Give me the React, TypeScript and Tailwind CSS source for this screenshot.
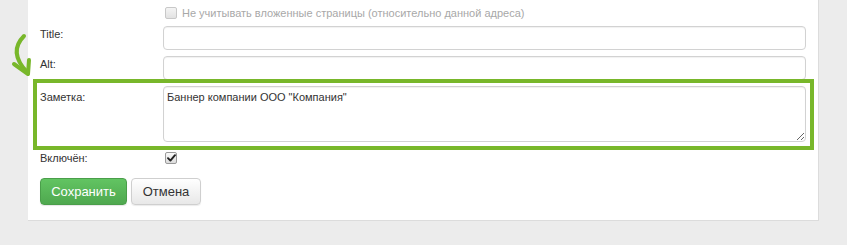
import React from "react";

function Check({ checked, disabled }: { checked?: boolean; disabled?: boolean }) {
  return (
    <span
      className={
        disabled
          ? "flex h-[12px] w-[12px] items-center justify-center rounded-[2px] border border-[#c8c8c8] bg-gradient-to-b from-[#f4f4f4] to-[#e2e2e2]"
          : "flex h-[12px] w-[12px] items-center justify-center rounded-[2px] border border-[#9a9a9a] bg-gradient-to-b from-[#fafafa] to-[#dcdcdc]"
      }
    >
      {checked && (
        <svg width="9" height="8" viewBox="0 0 9 8">
          <path d="M1 4.2 L3.4 6.6 L8 1.2" fill="none" stroke="#222" strokeWidth="1.9" strokeLinecap="round" strokeLinejoin="round" />
        </svg>
      )}
    </span>
  );
}

export default function App() {
  return (
    <div className="relative h-[245px] w-[847px] overflow-hidden bg-[#ececec] font-['Liberation_Sans',Arial,sans-serif] text-[11px] text-[#333]">
      <svg className="absolute left-0 top-0" width="40" height="85" viewBox="0 0 40 85">
        <path d="M24 36 Q8 52 27 72" fill="none" stroke="#78b72a" strokeWidth="4" strokeLinecap="round" />
        <path d="M14 64 L28 74 L29 60" fill="none" stroke="#78b72a" strokeWidth="4" strokeLinecap="round" strokeLinejoin="round" />
      </svg>
      <div className="ml-[28px] h-[221px] w-[791px] border-b border-r border-[#dcdcdc] bg-white px-[12px] pt-[7px]">
        <div className="flex h-[12px] items-center">
          <div className="w-[125px] shrink-0" />
          <Check disabled />
          <span className="ml-[5px] leading-[16px] text-[#a8a8a8]">
            Не учитывать вложенные страницы (относительно данной адреса)
          </span>
        </div>
        <div className="mt-[7px] flex">
          <div className="w-[123px] shrink-0 leading-[16px]">Title:</div>
          <input className="h-[24px] flex-1 rounded-[4px] border border-[#d2d2d2] bg-white shadow-[inset_0_1px_1px_rgba(0,0,0,0.06)] outline-none" />
        </div>
        <div className="mt-[6px] flex">
          <div className="w-[123px] shrink-0 leading-[16px]">Alt:</div>
          <input className="h-[24px] flex-1 rounded-[4px] border border-[#d2d2d2] bg-white shadow-[inset_0_1px_1px_rgba(0,0,0,0.06)] outline-none" />
        </div>
        <div className="relative -mt-[1px] ml-[-7px] mr-[-8px] flex border-[4px] border-[#78b72a] pb-[4px] pl-[3px] pr-[4px] pt-[3px]">
          <div className="w-[123px] shrink-0 pt-[3px] leading-[16px]">Заметка:</div>
          <textarea
            defaultValue={'Баннер компании ООО "Компания"'}
            className="h-[56px] flex-1 resize rounded-[4px] border border-[#d2d2d2] bg-white px-[3px] pt-[2px] font-['Liberation_Sans',Arial,sans-serif] text-[11px] leading-[16px] text-[#333] shadow-[inset_0_1px_1px_rgba(0,0,0,0.06)] outline-none"
          />
        </div>
        <div className="flex items-start">
          <div className="w-[125px] shrink-0 leading-[16px]">Включён:</div>
          <div className="mt-[2px]">
            <Check checked />
          </div>
        </div>
        <div className="mt-[12px] flex gap-[4px]">
          <button className="flex h-[27px] w-[87px] items-center justify-center rounded-[4px] border border-[#4a9e4a] bg-gradient-to-b from-[#62c462] to-[#4fa84f] text-[13px] text-white shadow-[0_1px_1px_rgba(0,0,0,0.1)]">
            Сохранить
          </button>
          <button className="flex h-[27px] w-[70px] items-center justify-center rounded-[4px] border border-[#cfcfcf] bg-gradient-to-b from-[#ffffff] to-[#e8e8e8] text-[13px] text-[#333] shadow-[0_1px_1px_rgba(0,0,0,0.08)]">
            Отмена
          </button>
        </div>
      </div>
    </div>
  );
}
